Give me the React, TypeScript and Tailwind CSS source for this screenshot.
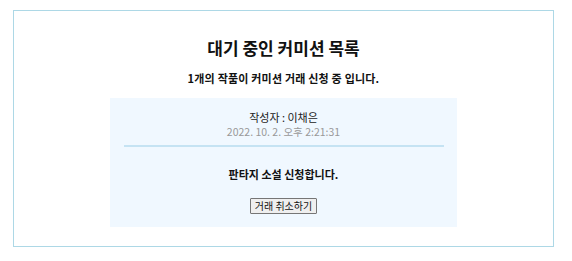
export default function App() {
  return (
    <div className="w-[572px] h-[261px] bg-white pt-[10px] pl-[13px]" style={{ fontFamily: '"Noto Sans CJK KR", "Noto Sans", sans-serif' }}>
      <div className="w-[541px] h-[237px] border border-[#add8e6] flex flex-col items-center">
        <div className="mt-[25px] h-[24px] leading-[24px] text-[17px] font-bold text-[#111]">대기 중인 커미션 목록</div>
        <div className="mt-[9px] h-[18px] leading-[18px] text-[11px] font-bold text-[#111] tracking-[0.2px]">1개의 작품이 커미션 거래 신청 중 입니다.</div>
        <div className="mt-[11px] w-[347px] h-[129px] bg-[#f0f8ff] flex flex-col items-center">
          <div className="mt-[11px] h-[16px] leading-[16px] text-[11px] text-[#222]">작성자 : 이채은</div>
          <div className="h-[14px] leading-[14px] text-[10.5px] text-[#999]">2022. 10. 2. 오후 2:21:31</div>
          <div className="mt-[6px] w-[320px] h-[2px] bg-[#c5e3f3]" />
          <div className="mt-[19px] h-[16px] leading-[16px] text-[11px] font-bold text-[#111]">판타지 소설 신청합니다.</div>
          <button className="mt-[16px] h-[16px] px-[4px] text-[10px] leading-[12px] text-[#111] bg-[#efefef] border border-[#767676] rounded-[1px]">거래 취소하기</button>
        </div>
      </div>
    </div>
  );
}
